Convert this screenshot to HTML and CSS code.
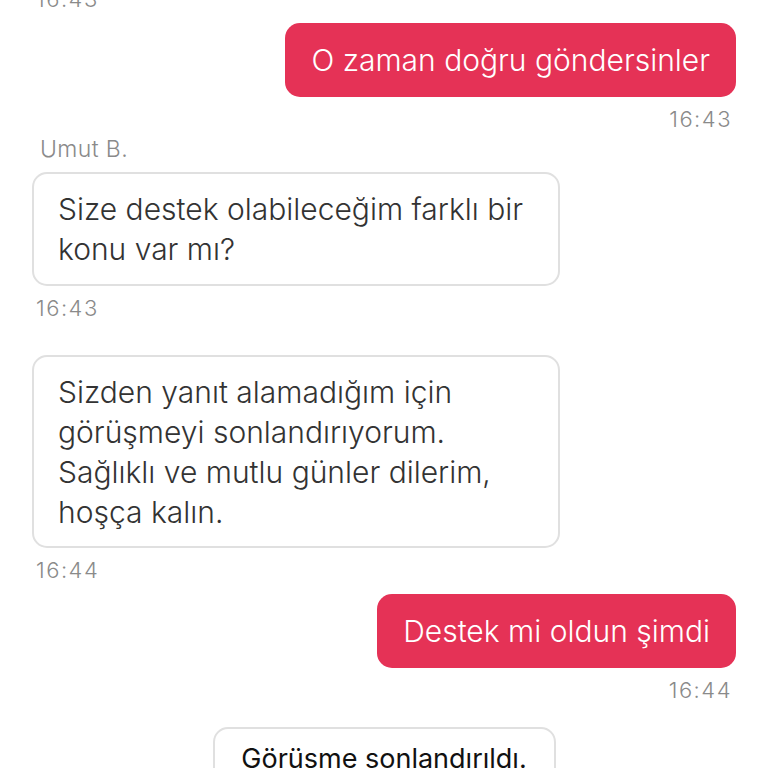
FILE: index.html
```html
<!DOCTYPE html>
<html lang="tr">
<head>
<meta charset="utf-8">
<link rel="stylesheet" href="styles.css">
</head>
<body>
<div class="chat">
  <div class="time left top-time">16:43</div>

  <div class="row out first">
    <div class="bubble red">O zaman doğru göndersinler</div>
  </div>
  <div class="time right">16:43</div>

  <div class="name">Umut B.</div>
  <div class="row in">
    <div class="bubble white">Size destek olabileceğim farklı bir konu var mı?</div>
  </div>
  <div class="time left">16:43</div>

  <div class="row in gap">
    <div class="bubble white">Sizden yanıt alamadığım için görüşmeyi sonlandırıyorum. Sağlıklı ve mutlu günler dilerim, hoşça kalın.</div>
  </div>
  <div class="time left">16:44</div>

  <div class="row out">
    <div class="bubble red">Destek mi oldun şimdi</div>
  </div>
  <div class="time right">16:44</div>

  <div class="row center">
    <div class="bubble system">Görüşme sonlandırıldı.</div>
  </div>
</div>
</body>
</html>
```

FILE: styles.css
```css
html, body {
  margin: 0;
  padding: 0;
  background: #ffffff;
  height: 768px;
  overflow: hidden;
}
.chat {
  font-family: Inter, Roboto, "Liberation Sans", Arial, sans-serif;
  padding: 0 32px;
  display: flex;
  flex-direction: column;
  margin-top: -14px;
}
.row {
  display: flex;
}
.row.out {
  justify-content: flex-end;
  margin-top: 11px;
}
.row.in {
  justify-content: flex-start;
  margin-top: 10px;
}
.row.in.gap {
  margin-top: 34px;
}
.row.center {
  justify-content: center;
  margin-top: 24px;
}
.bubble {
  border-radius: 15px;
  box-sizing: border-box;
  font-size: 30px;
  line-height: 40px;
  font-weight: 300;
}
.red {
  background: #e53256;
  color: #ffffff;
  padding: 17px 26px;
  height: 74px;
}
.white {
  width: 528px;
  background: #ffffff;
  border: 2px solid #e0e0e0;
  color: #333333;
  padding: 15px 24px 15px;
}
.gap .white {
  padding-bottom: 14px;
}
.system {
  width: 343px;
  background: #ffffff;
  border: 2px solid #e0e0e0;
  color: #111111;
  text-align: center;
  padding: 10px 20px;
  font-size: 27px;
  font-weight: 400;
}
.time {
  font-size: 22px;
  line-height: 26px;
  color: #8a8a8a;
  margin-top: 9px;
  font-weight: 300;
  letter-spacing: 1.5px;
}
.time.left {
  padding-left: 4px;
}
.time.right {
  text-align: right;
  padding-right: 4px;
}
.top-time {
  margin-top: 0;
}
.name {
  font-size: 23px;
  line-height: 26px;
  color: #8a8a8a;
  padding-left: 8px;
  margin-top: 4px;
  font-weight: 300;
  letter-spacing: 0.4px;
}
```
